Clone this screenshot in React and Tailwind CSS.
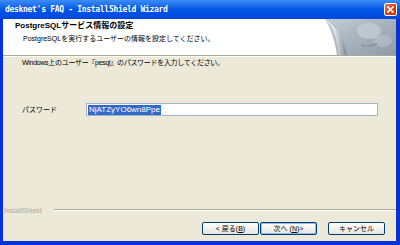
const jp = "font-['Liberation_Sans','Noto_Sans_CJK_JP',sans-serif]";

function CloseButton() {
  return (
    <div className="flex h-[13px] w-[13px] items-center justify-center rounded-[2px] border border-white bg-gradient-to-br from-[#e97a5a] via-[#d9421c] to-[#c23513]">
      <svg width="7" height="7" viewBox="0 0 7 7">
        <path d="M1 1 L6 6 M6 1 L1 6" stroke="#fff" strokeWidth="1.6" strokeLinecap="square" />
      </svg>
    </div>
  );
}

function PageCurl() {
  return (
    <svg width="71" height="36" viewBox="0 0 71 36" className="shrink-0">
      <defs>
        <linearGradient id="bg" x1="0" y1="0" x2="1" y2="1">
          <stop offset="0" stopColor="#c3ccd4" />
          <stop offset="0.5" stopColor="#a7b2bc" />
          <stop offset="1" stopColor="#8e9aa6" />
        </linearGradient>
        <linearGradient id="curl" x1="0" y1="0" x2="1" y2="0">
          <stop offset="0" stopColor="#ffffff" />
          <stop offset="0.45" stopColor="#dfe4e8" />
          <stop offset="1" stopColor="#7d8995" />
        </linearGradient>
      </defs>
      <path d="M0 0 H71 V36 H12 C10 22 6 10 0 0 Z" fill="url(#bg)" />
      <ellipse cx="44" cy="12" rx="12" ry="8" fill="#c8d0d7" opacity="0.7" />
      <ellipse cx="58" cy="22" rx="9" ry="6" fill="#b9c3cb" opacity="0.6" />
      <path d="M36 26 Q44 28 52 25" stroke="#8894a0" strokeWidth="1.5" fill="none" />
      <path d="M0 0 C7 6 12 16 13 36 H22 C20 22 14 10 0 0 Z" fill="url(#curl)" />
    </svg>
  );
}

function WizButton({ children, isDefault }) {
  return (
    <button
      type="button"
      className={`flex h-[13px] w-[57px] items-center justify-center rounded-[2px] border border-[#003c74] bg-gradient-to-b from-white to-[#e6e5de] text-[7px] leading-none text-black ${jp} ${
        isDefault ? "shadow-[inset_0_0_0_1px_#98b8ea]" : ""
      }`}
    >
      {children}
    </button>
  );
}

export default function App() {
  return (
    <div className="flex h-[245px] w-[400px] flex-col bg-[#0831d9]">
      <div className="flex h-[19px] shrink-0 items-center justify-between bg-gradient-to-b from-[#3d8cf5] via-[#0056e6] to-[#0048dc] pl-[5px] pr-[3px]">
        <span className="font-['DejaVu_Sans_Mono',monospace] text-[8px] font-bold tracking-[-0.3px] text-white">
          desknet's FAQ - InstallShield Wizard
        </span>
        <CloseButton />
      </div>

      <div className="mb-[4px] ml-[3px] mr-[4px] flex flex-1 flex-col">
        <header className="flex h-[36px] shrink-0 items-stretch justify-between bg-white">
          <div className={`flex flex-col pt-[2px] ${jp}`}>
            <h1 className="pl-[12px] text-[8px] font-bold leading-[10px] text-black">
              PostgreSQLサービス情報の設定
            </h1>
            <p className="mt-[3px] pl-[20px] text-[7px] leading-[10px] text-black">
              PostgreSQLを実行するユーザーの情報を設定してください。
            </p>
          </div>
          <PageCurl />
        </header>
        <div className="h-px shrink-0 bg-[#aca899]" />
        <div className="h-px shrink-0 bg-white" />

        <main className={`flex flex-1 flex-col bg-[#ece9d8] ${jp}`}>
          <p className="pl-[19px] pt-[1px] text-[7px] leading-[10px] tracking-[-0.3px] text-black">
            Windows上のユーザー『pesql』のパスワードを入力してください。
          </p>

          <div className="mt-[35px] flex h-[13px] items-center pl-[19px] pr-[18px]">
            <label className="w-[64px] shrink-0 text-[7px] leading-none text-black">パスワード</label>
            <div className="flex h-[13px] flex-1 items-center border border-[#9eb3cc] bg-white px-px">
              <span className="bg-[#316ac5] px-px text-[8px] leading-[10px] text-white">NjATZyYO6wn8Ppe</span>
            </div>
          </div>

          <div className="flex-1" />

          <div className="flex h-[10px] items-center pl-px">
            <span className="w-[50px] shrink-0 text-[7px] leading-none text-[#aca899]">InstallShield</span>
            <div className="flex flex-1 flex-col">
              <div className="h-px bg-[#aca899]" />
              <div className="h-px bg-white" />
            </div>
          </div>

          <div className="mb-[6px] mt-[7px] flex items-center justify-end pr-[11px]">
            <WizButton>
              &lt; 戻る(<span className="underline">B</span>)
            </WizButton>
            <div className="ml-px">
              <WizButton isDefault>
                次へ (<span className="underline">N</span>)&gt;
              </WizButton>
            </div>
            <div className="ml-[11px]">
              <WizButton>キャンセル</WizButton>
            </div>
          </div>
        </main>
      </div>
    </div>
  );
}
